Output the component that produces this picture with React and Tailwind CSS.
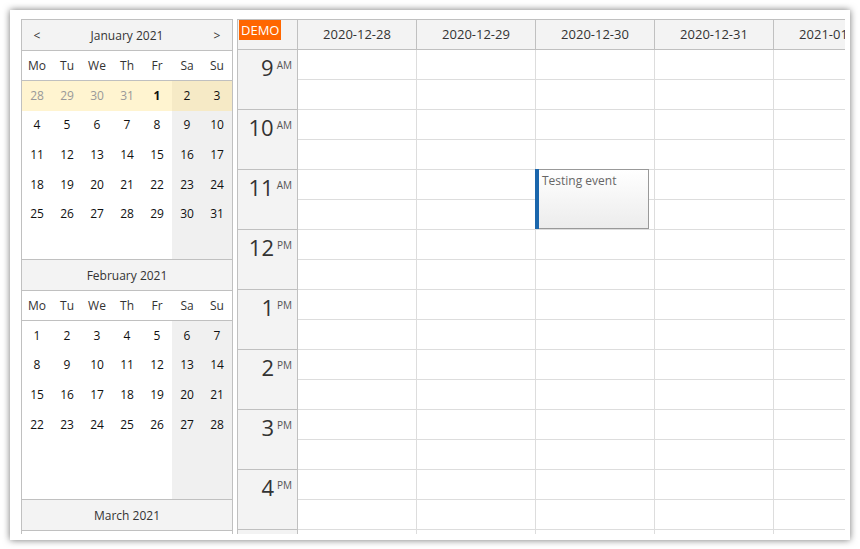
import React from 'react';

const DAYS = ['Mo', 'Tu', 'We', 'Th', 'Fr', 'Sa', 'Su'];

const january = [
  [
    { d: 28, other: true }, { d: 29, other: true }, { d: 30, other: true }, { d: 31, other: true },
    { d: 1, bold: true }, { d: 2 }, { d: 3 },
  ],
  [4, 5, 6, 7, 8, 9, 10],
  [11, 12, 13, 14, 15, 16, 17],
  [18, 19, 20, 21, 22, 23, 24],
  [25, 26, 27, 28, 29, 30, 31],
  [null, null, null, null, null, null, null],
];

const february = [
  [1, 2, 3, 4, 5, 6, 7],
  [8, 9, 10, 11, 12, 13, 14],
  [15, 16, 17, 18, 19, 20, 21],
  [22, 23, 24, 25, 26, 27, 28],
  [null, null, null, null, null, null, null],
  [null, null, null, null, null, null, null],
];

const columns = ['2020-12-28', '2020-12-29', '2020-12-30', '2020-12-31', '2021-01-01'];

// last row (5 PM) only shows its top border, the label is cut away
const hours = [
  { h: '9', p: 'AM' },
  { h: '10', p: 'AM' },
  { h: '11', p: 'AM' },
  { h: '12', p: 'PM' },
  { h: '1', p: 'PM' },
  { h: '2', p: 'PM' },
  { h: '3', p: 'PM' },
  { h: '4', p: 'PM' },
  { h: '', p: '' },
];

function Cell({ item, col, highlight }) {
  const cell = typeof item === 'object' && item !== null ? item : { d: item };
  const weekend = col >= 5;
  let bg = weekend ? 'bg-[#f0f0f0]' : 'bg-white';
  if (highlight) bg = weekend ? 'bg-[#f6eac6]' : 'bg-[#fff4d0]';
  return (
    <div
      className={`flex items-center justify-center ${bg} ${cell.other ? 'text-[#999]' : 'text-[#111]'} ${
        cell.bold ? 'font-bold' : ''
      }`}
    >
      {cell.d}
    </div>
  );
}

function Month({ title, weeks, nav, highlightFirst }) {
  return (
    <div className="text-[12px]">
      {/* month title */}
      <div className="h-[31px] border-t border-[#c0c0c0] bg-[#f3f3f3] grid grid-cols-7 items-center pt-[2px] text-[#333]">
        <div className="text-center">{nav ? '<' : ''}</div>
        <div className="col-span-5 text-center">{title}</div>
        <div className="text-center">{nav ? '>' : ''}</div>
      </div>
      {weeks ? (
        <>
          {/* day names */}
          <div className="h-[30px] border-t border-[#c0c0c0] bg-white grid grid-cols-7 items-center text-center text-[#333]">
            {DAYS.map((d) => (
              <div key={d}>{d}</div>
            ))}
          </div>
          {/* days */}
          <div className="h-[179px] border-t border-[#c0c0c0] grid grid-cols-7 grid-rows-6">
            {weeks.map((week, wi) =>
              week.map((item, ci) => (
                <Cell key={`${wi}-${ci}`} item={item} col={ci} highlight={highlightFirst && wi === 0} />
              ))
            )}
          </div>
        </>
      ) : (
        <div className="h-[30px] border-t border-[#c0c0c0] bg-white" />
      )}
    </div>
  );
}

export default function App() {
  return (
    <div className="w-[860px] h-[549px] bg-white pt-[10px] pl-[10px] font-['Open_Sans','Noto_Sans',sans-serif]">
      <div className="w-[840px] h-[530px] bg-white shadow-[0_0_7px_rgba(0,0,0,0.55)] pt-[9px] pl-[11px]">
        <div className="w-[824px] h-[515px] flex overflow-hidden">
          {/* Navigator */}
          <div className="w-[212px] h-full shrink-0 border-l border-r border-[#c0c0c0] overflow-hidden">
            <Month title="January 2021" weeks={january} nav highlightFirst />
            <Month title="February 2021" weeks={february} />
            <Month title="March 2021" />
          </div>

          {/* Calendar */}
          <div className="ml-[4px] flex-1 h-full border-l border-[#c0c0c0] overflow-hidden">
            <div className="flex h-[31px] border-t border-b border-[#c0c0c0] bg-[#f3f3f3]">
              <div className="w-[60px] shrink-0 border-r border-[#c0c0c0] relative">
                <span className="absolute top-0 left-[1px] bg-[#ff6600] text-white text-[13px] leading-[20px] px-[2px]">
                  DEMO
                </span>
              </div>
              {columns.map((c) => (
                <div
                  key={c}
                  className="w-[119px] shrink-0 border-r border-[#c0c0c0] flex items-center justify-center text-[13px] text-[#333]"
                >
                  {c}
                </div>
              ))}
            </div>

            <div className="flex relative">
              <div className="w-[60px] shrink-0 border-r border-[#c0c0c0] bg-[#f3f3f3]">
                {hours.map((h, i) => (
                  <div key={i} className="h-[60px] border-b border-[#c0c0c0] flex justify-end items-start pr-[5px] pt-[6px] text-[#333]">
                    <span className="text-[22px] leading-none">{h.h}</span>
                    <span className="text-[10px] leading-none ml-[3px] mt-[4px] text-[#555]">{h.p}</span>
                  </div>
                ))}
              </div>
              {columns.map((c) => (
                <div key={c} className="w-[119px] shrink-0 border-r border-[#ddd]">
                  {hours.map((h, i) => (
                    <React.Fragment key={i}>
                      <div className="h-[30px] border-b border-[#ddd]" />
                      <div className="h-[30px] border-b border-[#ddd]" />
                    </React.Fragment>
                  ))}
                </div>
              ))}

              {/* event */}
              <div className="absolute left-[297px] top-[119px] w-[114px] h-[60px] flex border border-[#999] bg-linear-to-b from-white to-[#ececec]">
                <div className="w-[4px] bg-[#1a66ac] shrink-0 -ml-px -my-px" />
                <div className="pl-[3px] pt-[2px] text-[12px] text-[#666]">Testing event</div>
              </div>
            </div>
          </div>
        </div>
      </div>
    </div>
  );
}
